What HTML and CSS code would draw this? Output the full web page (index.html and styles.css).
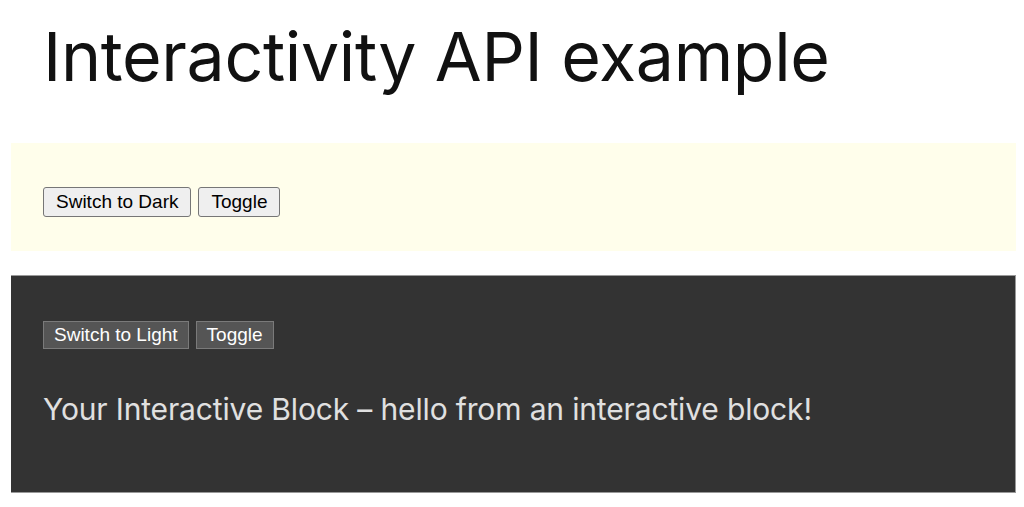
FILE: index.html
```html
<!DOCTYPE html>
<html lang="en">
<head>
  <meta charset="UTF-8">
  <title>Interactivity API example</title>
  <link rel="stylesheet" href="styles.css">
</head>
<body>

<h1 class="page-title">Interactivity API example</h1>

<!-- light theme block -->
<div class="block block-light">
  <div class="controls">
    <button class="btn">Switch to Dark</button>
    <button class="btn">Toggle</button>
  </div>
</div>

<!-- dark theme block -->
<div class="block block-dark">
  <div class="controls">
    <button class="btn">Switch to Light</button>
    <button class="btn">Toggle</button>
  </div>
  <p class="message">Your Interactive Block – hello from an interactive block!</p>
</div>

</body>
</html>
```

FILE: styles.css
```css
body {
  margin: 0;
  padding: 0 8px 0 11px;
  background: #fff;
  font-family: Inter, "Noto Sans", sans-serif;
}

.page-title {
  margin: 0;
  padding: 16px 0 0 32px;
  font-size: 68px;
  font-weight: 400;
  line-height: 1.2;
  color: #111;
  letter-spacing: -0.005em;
}

.block {
  box-sizing: border-box;
}

.block-light {
  margin-top: 45px;
  height: 108px;
  padding: 44px 32px 0;
  background: #fffeeb;
}

.block-dark {
  margin-top: 24px;
  height: 218px;
  padding: 45px 32px 0;
  background: #333;
  border: 1px solid #999;
  border-left: none;
}

.controls {
  display: flex;
  gap: 7px;
}

.btn {
  font-family: "Liberation Sans", Arial, sans-serif;
  font-size: 19px;
  padding: 0 12px;
  height: 30px;
  line-height: 28px;
  border-radius: 3px;
  border: 1px solid #767676;
  background: #efefef;
  color: #000;
}

.block-dark .btn {
  padding: 0 10px;
  height: 28px;
  line-height: 26px;
  border-radius: 0;
  border: 1px solid #7a7a7a;
  background: #555;
  color: #fff;
}

.message {
  margin: 42px 0 0;
  font-size: 30px;
  line-height: 1.2;
  color: #e0e0e0;
  letter-spacing: -0.005em;
}
```
